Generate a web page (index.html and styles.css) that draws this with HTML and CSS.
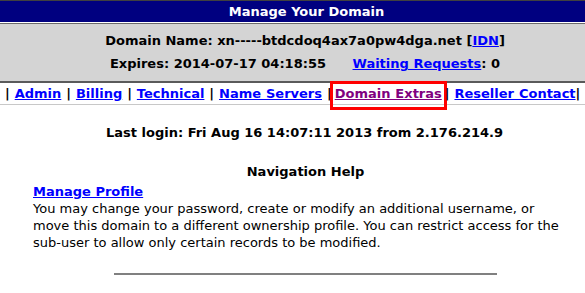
FILE: index.html
```html
<!DOCTYPE html>
<html lang="en">
<head>
  <meta charset="UTF-8">
  <title>Manage Your Domain</title>
  <link rel="stylesheet" href="styles.css">
</head>
<body>
  <div class="panel">
    <div class="panel-title">Manage Your Domain</div>
    <div class="panel-info">
      <div class="info-line">Domain Name: xn-----btdcdoq4ax7a0pw4dga.net [<a href="#">IDN</a>]</div>
      <div class="info-line">Expires: 2014-07-17 04:18:55 <span class="gap"></span><a href="#">Waiting Requests</a>: 0</div>
    </div>
    <div class="panel-nav">
      | <a href="#">Admin</a> | <a href="#">Billing</a> | <a href="#">Technical</a> | <a href="#">Name Servers</a> |<a href="#" class="visited marked">Domain Extras</a>| <a href="#">Reseller Contact</a>|
    </div>
  </div>

  <div class="last-login">Last login: Fri Aug 16 14:07:11 2013 from 2.176.214.9</div>

  <div class="help">
    <h3>Navigation Help</h3>
    <a href="#" class="help-link">Manage Profile</a>
    <p>You may change your password, create or modify an additional username, or move this domain to a different ownership profile. You can restrict access for the sub-user to allow only certain records to be modified.</p>
  </div>

  <hr class="divider">
</body>
</html>
```

FILE: styles.css
```css
body {
  margin: 0;
  font-family: "DejaVu Sans", Verdana, sans-serif;
  font-size: 13px;
  color: #000;
  background: #fff;
}
a {
  color: #0000ff;
  font-weight: bold;
}
a.visited {
  color: #800080;
}
.panel {
  font-size: 13px;
  font-weight: bold;
}
.panel-title {
  height: 21px;
  line-height: 21px;
  padding-left: 28px;
  border-top: 1px solid #404040;
  border-bottom: 1px solid #fff;
  background-color: #000080;
  color: #fff;
  text-align: center;
}
.panel-info {
  padding: 5px 0 6px 25px;
  border-top: 1px solid #6a6a6a;
  border-bottom: 2px solid #5a5a5a;
  background-color: #d4d4d4;
  text-align: center;
}
.info-line {
  line-height: 23px;
}
.gap {
  display: inline-block;
  width: 22px;
}
.panel-nav {
  height: 21px;
  line-height: 21px;
  padding-left: 5px;
  border-bottom: 1px solid #c8c8c8;
  white-space: nowrap;
  word-spacing: 0.4px;
}
.marked {
  display: inline-block;
  padding: 0 3px 4px;
  outline: 3px solid #ff0000;
  outline-offset: -1px;
  line-height: 21px;
  vertical-align: top;
}
.last-login {
  margin-top: 20px;
  padding-left: 24px;
  font-weight: bold;
  text-align: center;
}
.help {
  margin: 24px 20px 0 33px;
}
.help h3 {
  margin: 0 0 5px;
  padding-left: 13px;
  font-size: 13px;
  text-align: center;
}
.help-link {
  font-size: 13px;
}
.help p {
  margin: 1px 0 0;
  line-height: 17px;
}
.divider {
  width: 383px;
  margin: 22px 0 0 114px;
  border: 0;
  border-top: 2px solid #808080;
}
```
